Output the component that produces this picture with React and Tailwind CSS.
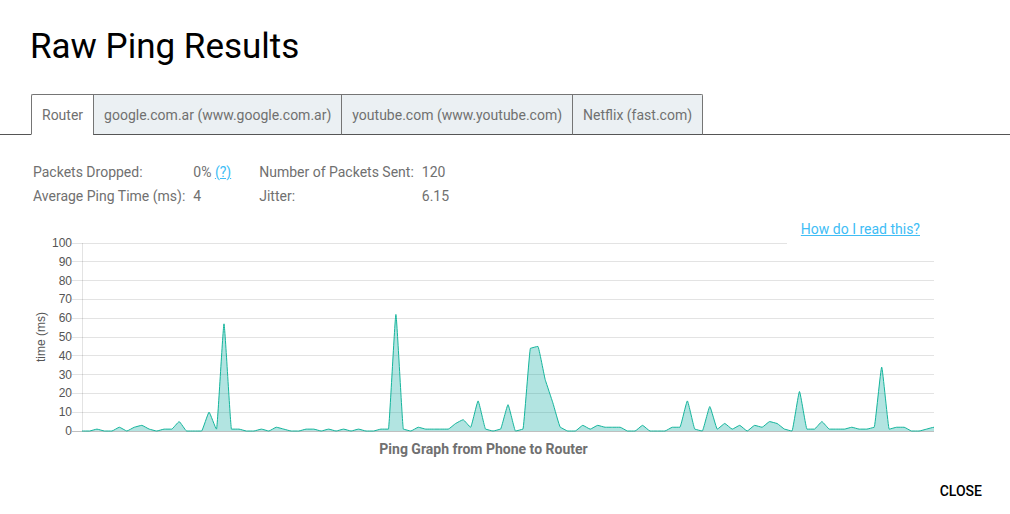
import { useState } from 'react';

const tabs = [
  'Router',
  'google.com.ar (www.google.com.ar)',
  'youtube.com (www.youtube.com)',
  'Netflix (fast.com)',
];

const ticks = [100, 90, 80, 70, 60, 50, 40, 30, 20, 10, 0];

const pings = [
  0, 0, 1, 0, 0, 2, 0, 2, 3, 1, 0, 1, 1, 5, 0, 0, 0, 10, 1, 57,
  1, 1, 0, 0, 1, 0, 2, 1, 0, 0, 1, 1, 0, 1, 0, 1, 0, 1, 0, 0,
  1, 1, 62, 1, 0, 2, 1, 1, 1, 1, 4, 6, 2, 16, 1, 0, 1, 14, 0, 1,
  44, 45, 27, 15, 2, 0, 0, 3, 1, 3, 2, 2, 2, 0, 0, 3, 0, 0, 0, 2,
  2, 16, 1, 0, 13, 1, 4, 1, 3, 0, 3, 2, 5, 4, 1, 0, 21, 1, 1, 5,
  1, 1, 1, 2, 1, 1, 2, 34, 1, 2, 2, 0, 0, 1, 2,
];

const last = pings.length - 1;

// slightly rounded line, flat through every local peak and valley
function linePath(values) {
  const slope = (i) => {
    if (i === 0 || i === last) return 0;
    const before = values[i] - values[i - 1];
    const after = values[i + 1] - values[i];
    if (before * after <= 0) return 0;
    return Math.abs(before) < Math.abs(after) ? before : after;
  };
  const t = 0.12;
  let d = `M0 ${100 - values[0]}`;
  for (let i = 1; i <= last; i++) {
    const y1 = 100 - values[i - 1] - slope(i - 1) * t;
    const y2 = 100 - values[i] + slope(i) * t;
    d += `C${i - 1 + t} ${y1} ${i - t} ${y2} ${i} ${100 - values[i]}`;
  }
  return d;
}

function PingChart() {
  const line = linePath(pings);

  return (
    <figure className="relative mt-[35px] ml-[33px] mr-[76px]">
      <div className="flex h-[188px] font-['Liberation_Sans',sans-serif] text-xs text-[#555]">
        <div className="flex w-4 items-center justify-center">
          <span className="-rotate-90 whitespace-nowrap">time (ms)</span>
        </div>
        <ul className="-my-2 flex w-[23px] flex-col justify-between text-right leading-4">
          {ticks.map((tick) => (
            <li key={tick}>{tick}</li>
          ))}
        </ul>
        <svg className="ml-[10px] h-[188px] min-w-0 flex-1 overflow-visible" role="img" aria-label="Ping times">
          {ticks.map((tick) => (
            <line
              key={tick}
              x1="-10"
              x2="100%"
              y1={`${100 - tick}%`}
              y2={`${100 - tick}%`}
              stroke="#000"
              strokeOpacity={tick === 0 ? 0.25 : 0.11}
              shapeRendering="crispEdges"
            />
          ))}
          <line x1="0" x2="0" y1="0" y2="100%" stroke="#000" strokeOpacity="0.11" shapeRendering="crispEdges" />
          <svg width="100%" height="188" viewBox={`0 0 ${last} 100`} preserveAspectRatio="none" overflow="visible">
            <path d={`${line}L${last} 100L0 100Z`} fill="#00a79d" fillOpacity="0.3" />
            <path d={line} fill="none" stroke="#14b59c" strokeLinejoin="round" vectorEffect="non-scaling-stroke" />
          </svg>
        </svg>
      </div>
      <div className="absolute -top-8 right-0 bg-white px-[14px] pt-2 pb-4 leading-5">
        <a href="#help" className="text-[#40bdf5] underline">How do I read this?</a>
      </div>
      <figcaption className="mt-2 text-center leading-5 font-bold">Ping Graph from Phone to Router</figcaption>
    </figure>
  );
}

export default function App() {
  const [active, setActive] = useState(tabs[0]);

  return (
    <main className="bg-white font-[Roboto,sans-serif] text-sm text-[#707070]">
      <h1 className="px-[30px] pt-6 text-[35px] leading-[46px] text-black">Raw Ping Results</h1>

      <div className="mt-6 flex border-b border-[#555] pl-[31px]" role="tablist">
        {tabs.map((tab) => (
          <button
            key={tab}
            type="button"
            role="tab"
            aria-selected={active === tab}
            onClick={() => setActive(tab)}
            className={`-mb-px h-[41px] border-t border-b border-l border-[#757575] px-[10px] whitespace-nowrap first:rounded-tl-xs last:rounded-tr-xs last:border-r ${
              active === tab ? 'border-b-white bg-white' : 'border-b-[#555] bg-[#ebf0f3]'
            }`}
          >
            {tab}
          </button>
        ))}
      </div>

      <table className="mt-[25px] ml-[33px] text-left leading-6">
        <tbody>
          <tr>
            <th className="pr-2 font-normal">Packets Dropped:</th>
            <td className="pr-7">
              0% <a href="#dropped" className="text-[#40bdf5] underline">(?)</a>
            </td>
            <th className="pr-2 font-normal">Number of Packets Sent:</th>
            <td>120</td>
          </tr>
          <tr>
            <th className="pr-2 font-normal">Average Ping Time (ms):</th>
            <td>4</td>
            <th className="font-normal">Jitter:</th>
            <td>6.15</td>
          </tr>
        </tbody>
      </table>

      <PingChart />

      <div className="flex justify-end px-7 pt-5 pb-3">
        <button type="button" className="leading-6 font-medium text-black">CLOSE</button>
      </div>
    </main>
  );
}
